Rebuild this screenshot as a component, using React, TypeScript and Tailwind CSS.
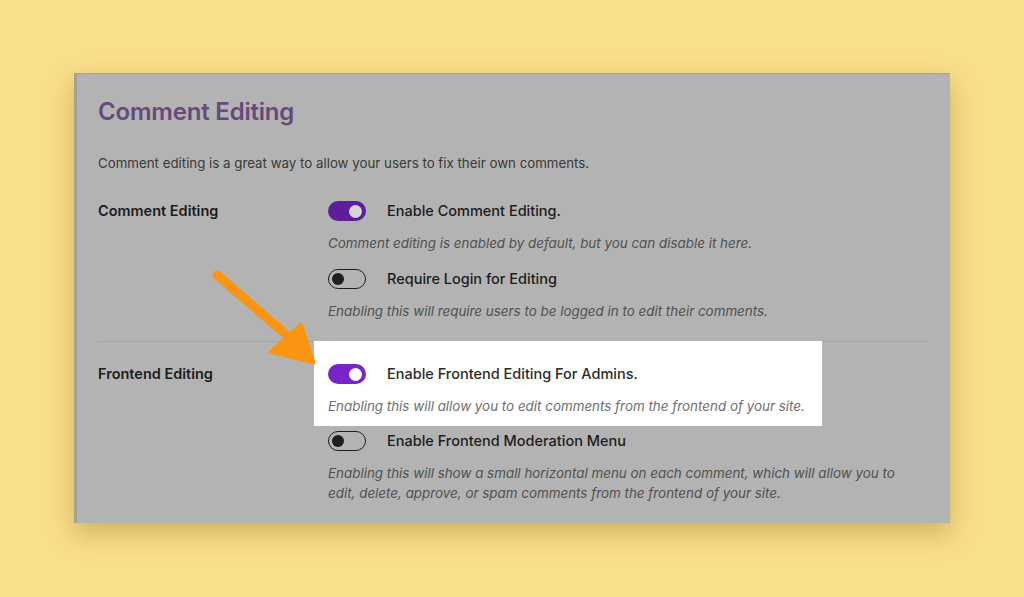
import React from 'react';

function Toggle({ on, bright }: { on: boolean; bright?: boolean }) {
  if (on) {
    return (
      <div
        className={`flex items-center justify-end w-[38px] h-[20px] rounded-full px-[4px] shrink-0 ${
          bright ? 'bg-[#7a24c8]' : 'bg-[#5e1e99]'
        }`}
      >
        <div className={`w-[13px] h-[13px] rounded-full ${bright ? 'bg-white' : 'bg-[#d6d6d6]'}`} />
      </div>
    );
  }
  return (
    <div className="flex items-center w-[38px] h-[20px] rounded-full border-[1.5px] border-[#1e1e1e] px-[3px] shrink-0">
      <div className="w-[12px] h-[12px] rounded-full bg-[#1e1e1e]" />
    </div>
  );
}

function Option({
  on,
  bright,
  title,
  desc,
}: {
  on: boolean;
  bright?: boolean;
  title: string;
  desc: string;
}) {
  return (
    <div>
      <div className="flex items-center h-[20px] gap-[21px]">
        <Toggle on={on} bright={bright} />
        <span className={`text-[14.5px] font-medium ${bright ? 'text-[#2a2a2a]' : 'text-[#1c1c1c]'}`}>{title}</span>
      </div>
      <p className={`mt-[12px] text-[13.4px] leading-[20px] italic ${bright ? 'text-[#6e6e6e]' : 'text-[#505050]'}`}>
        {desc}
      </p>
    </div>
  );
}

export default function App() {
  return (
    <div
      className="relative w-[1024px] h-[597px] bg-[#f9de8c] pt-[73px] pl-[74px] overflow-hidden"
      style={{ fontFamily: 'Inter, "Noto Sans", sans-serif' }}
    >
      <div className="w-[876px] h-[450px] bg-[#b3b3b3] border-l-[3px] border-t border-[#a2a2a2] shadow-[0_10px_24px_rgba(130,95,0,0.35)] pl-[21px] pr-[22px] pt-[22px]">
        <h1 className="text-[24px] leading-[32px] font-semibold text-[#664a7c] tracking-[-0.2px]">Comment Editing</h1>
        <p className="mt-[25px] text-[13.3px] leading-[20px] text-[#3a3a3a]">
          Comment editing is a great way to allow your users to fix their own comments.
        </p>

        {/* Comment Editing section */}
        <div className="flex mt-[28px] pb-[20px] border-b border-[#a5a5a5]">
          <div className="w-[230px] h-[20px] flex items-center text-[14.5px] font-semibold text-[#1c1c1c]">
            Comment Editing
          </div>
          <div className="flex flex-col gap-[16px]">
            <Option
              on
              title="Enable Comment Editing."
              desc="Comment editing is enabled by default, but you can disable it here."
            />
            <Option
              on={false}
              title="Require Login for Editing"
              desc="Enabling this will require users to be logged in to edit their comments."
            />
          </div>
        </div>

        {/* Frontend Editing section */}
        <div className="flex -mt-[1px]">
          <div className="w-[230px] pt-[23px]">
            <div className="h-[20px] flex items-center text-[14.5px] font-semibold text-[#1c1c1c]">Frontend Editing</div>
          </div>
          <div className="w-[585px]">
            <div className="-ml-[14px] w-[508px] bg-white pl-[14px] pt-[23px] pb-[10px]">
              <Option
                on
                bright
                title="Enable Frontend Editing For Admins."
                desc="Enabling this will allow you to edit comments from the frontend of your site."
              />
            </div>
            <div className="mt-[5px]">
              <Option
                on={false}
                title="Enable Frontend Moderation Menu"
                desc="Enabling this will show a small horizontal menu on each comment, which will allow you to edit, delete, approve, or spam comments from the frontend of your site."
              />
            </div>
          </div>
        </div>
      </div>

      {/* Annotation arrow */}
      <svg className="absolute left-0 top-0 pointer-events-none" width="1024" height="597" viewBox="0 0 1024 597">
        <line x1="217" y1="275" x2="290" y2="338" stroke="#fb9410" strokeWidth="9" strokeLinecap="round" />
        <polygon points="270,352 301,324 314,363" fill="#fb9410" stroke="#fb9410" strokeWidth="3" strokeLinejoin="round" />
      </svg>
    </div>
  );
}
